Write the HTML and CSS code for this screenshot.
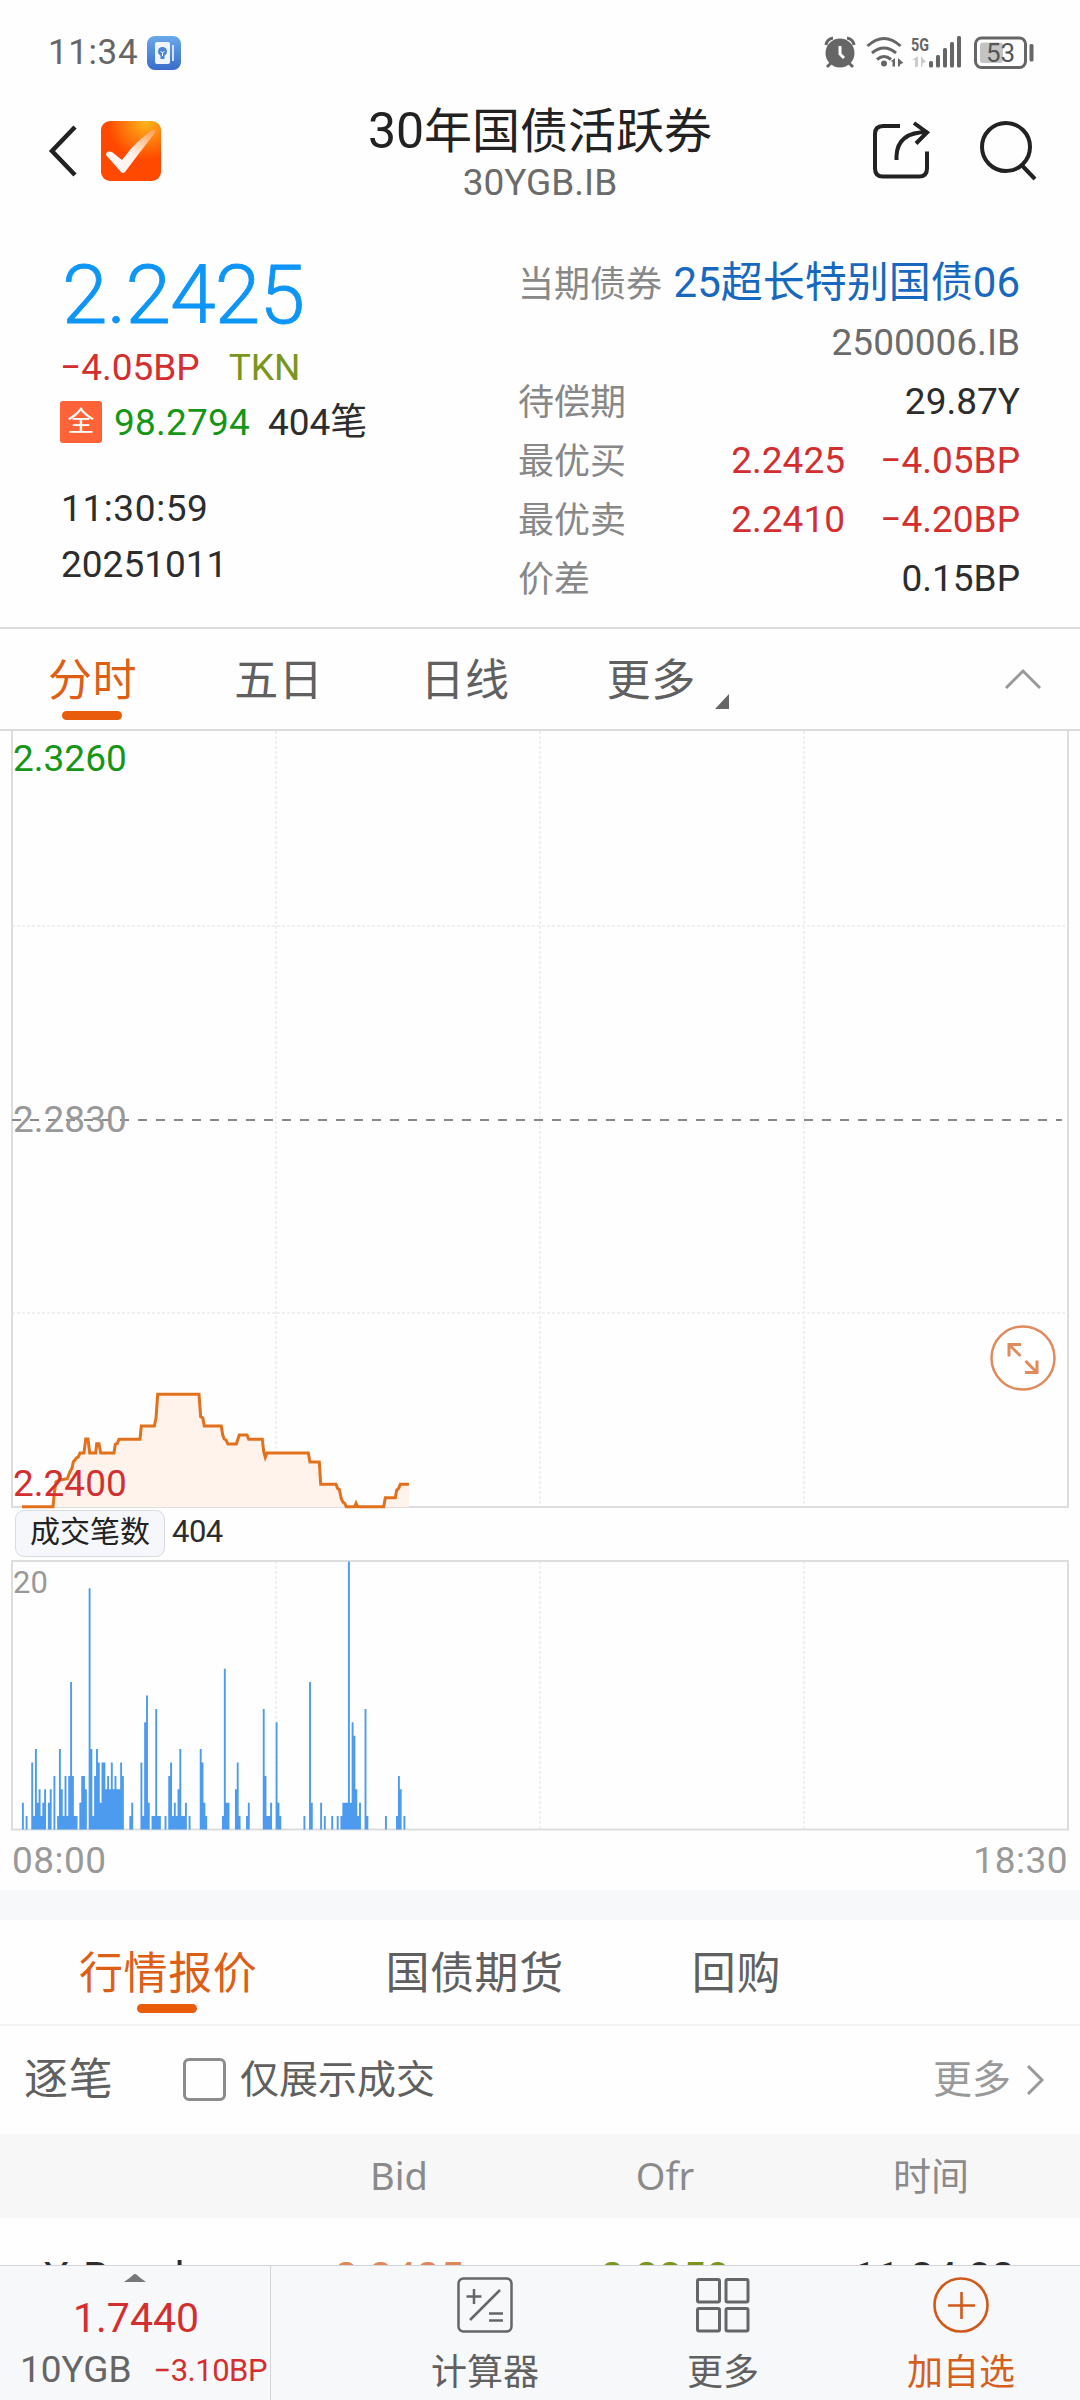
FILE: index.html
```html
<!DOCTYPE html>
<html lang="zh-CN">
<head>
    <meta charset="UTF-8">
    <meta name="viewport" content="width=device-width, initial-scale=1.0">
    <title>30年国债活跃券</title>
    <link rel="stylesheet" href="styles.css">
</head>
<body>

<div class="page">
    <div class="status">
        <span class="clock">11:34</span>
        <svg class="note" width="34" height="34" viewBox="0 0 34 34">
            <defs><linearGradient id="blue" x1="0" y1="0" x2="0" y2="1"><stop offset="0" stop-color="#69aaea"/><stop offset="1" stop-color="#3a6bcb"/></linearGradient></defs>
            <rect width="34" height="34" rx="8" fill="url(#blue)"/>
            <rect x="8" y="6" width="15" height="22" rx="2" fill="#eef5fd"/>
            <rect x="25" y="9" width="2" height="16" fill="#cfe0f7"/>
            <circle cx="15.500" cy="15.500" r="4.500" fill="#4a84d8"/>
            <path d="M13.500 19h4v4h-4z" fill="#4a84d8"/>
            <path d="M13.500 15l2 2 2-2M15.500 17v3" stroke="#fff" fill="none"/>
        </svg>
        <svg class="status-icons" width="212" height="36" viewBox="824 34 212 36">
            <g fill="#666" stroke="none">
                <circle cx="840" cy="53" r="14.500"/>
                <circle cx="884" cy="63.500" r="3"/>
                <rect x="929" y="61" width="4" height="6.500" rx="1.500"/>
                <rect x="936" y="55" width="4" height="12.500" rx="1.500"/>
                <rect x="943" y="48" width="4" height="19.500" rx="1.500"/>
                <rect x="950" y="42" width="4" height="25.500" rx="1.500"/>
                <rect x="957" y="36" width="4" height="31.500" rx="1.500"/>
                <rect x="1029.500" y="44" width="4" height="17.500" rx="1.500"/>
                <path d="M895 58v8.500h-2.500v-5h-2zM898 58l5.500 5-3 1-1 2.500h-1.500z"/>
            </g>
            <g fill="none" stroke="#666" stroke-width="3">
                <path d="M826 45q1-6 7-7M854 45q-1-6-7-7M832 62l-5 5M848 62l5 5"/>
                <path d="M867.500 46q16.500-15 33 0M872 53q12-10 24 0M877 59.500q7-6 14 0"/>
                <path d="M840 46v8l4 4" stroke="#fff"/>
                <rect x="975.500" y="38" width="50" height="29.500" rx="6" stroke-width="3"/>
            </g>
            <path d="M918 56v11h-3v-7h-3zM921 56l5 6-3 1-1 4h-1z" fill="#ccc"/>
            <rect x="980" y="42.500" width="23" height="20.500" rx="3" fill="#c3c3c3"/>
            <text x="911" y="50.500" class="net" textLength="18" lengthAdjust="spacingAndGlyphs">5G</text>
            <text x="986" y="62" class="battery">53</text>
        </svg>
    </div>

    <div class="nav">
        <div class="nav-left">
            <svg width="30" height="52" viewBox="0 0 30 52"><path d="M27 2L4 26l23 24" fill="none" stroke="#222" stroke-width="4.500"/></svg>
            <svg class="logo" width="60" height="60" viewBox="0 0 60 60">
                <defs>
                    <radialGradient id="glow" cx=".75" cy="0" r=".65"><stop offset="0" stop-color="#ffb81c"/><stop offset="1" stop-color="#ff4800"/></radialGradient>
                    <linearGradient id="tick" x1="0" y1="1" x2="1" y2="0"><stop offset="0" stop-color="#fff"/><stop offset=".5" stop-color="#fff0e8"/><stop offset="1" stop-color="#ff9c50"/></linearGradient>
                </defs>
                <rect width="60" height="60" rx="9" fill="url(#glow)"/>
                <path d="M5 34q0-5 6-3l10 8Q34 21 51 9q4-1 3 3Q38 32 24 51q-2 2-4 0Z" fill="url(#tick)"/>
            </svg>
        </div>
        <div class="nav-title">
            <h1><span class="n">30</span>年国债活跃券</h1>
            <p>30YGB.IB</p>
        </div>
        <div class="nav-right">
            <svg width="60" height="60" viewBox="870 121 60 60" fill="none" stroke="#222" stroke-width="4">
                <path d="M899 127H882q-8 0-8 8V169.500q0 8 8 8h36q8 0 8-8V152.500"/>
                <path d="M895.500 161v-4q1-24 31-24M913 124l13 9.500-11 11"/>
            </svg>
            <svg width="60" height="62" viewBox="979 118 60 62" fill="none" stroke="#222" stroke-width="4">
                <circle cx="1006" cy="146" r="24"/>
                <path d="M1022.500 165l12.500 13"/>
            </svg>
        </div>
    </div>

    <div class="quote">
        <div class="quote-left">
            <div class="price">2.2425</div>
            <div class="row"><span class="red">−4.05BP</span><span class="olive">TKN</span></div>
            <div class="row net-row"><span class="tag">全</span><span class="green">98.2794</span><span class="count">404笔</span></div>
            <div class="time">11:30:59</div>
            <div class="date">20251011</div>
        </div>
        <div class="quote-right">
            <div class="line"><label>当期债券</label><span class="bond">25超长特别国债06</span></div>
            <div class="line"><span class="code">2500006.IB</span></div>
            <div class="line"><label>待偿期</label><span>29.87Y</span></div>
            <div class="line red"><label>最优买</label><span class="best">2.2425</span><span class="bp">−4.05BP</span></div>
            <div class="line red"><label>最优卖</label><span class="best">2.2410</span><span class="bp">−4.20BP</span></div>
            <div class="line"><label>价差</label><span>0.15BP</span></div>
        </div>
    </div>

    <div class="tabs">
        <span class="tab active">分时</span>
        <span class="tab">五日</span>
        <span class="tab">日线</span>
        <span class="tab">更多</span>
        <svg class="corner" width="14" height="15" viewBox="0 0 14 15"><path d="M14 0v15H0z" fill="#666"/></svg>
        <svg class="fold" width="38" height="22" viewBox="0 0 38 22"><path d="M2 20L19 3l17 17" fill="none" stroke="#999" stroke-width="3"/></svg>
    </div>

    <div class="chart">
        <svg width="1080" height="778" viewBox="0 0 1080 778">
            <g class="grid-lines">
                <path d="M276 0v776M540 0v776M804 0v776M12 195h1056M12 582h1056"/>
            </g>
            <path d="M12 0v776h1056V0" fill="none" stroke="#ddd" stroke-width="2"/>
            <path d="M12 389h1050" stroke="#888" stroke-width="2" stroke-dasharray="9 9"/>
            <path id="area" fill="#fff3ec"/>
            <polyline id="line" fill="none" stroke="#e2711d" stroke-width="3" points="22,775.7 53,775.7 54.3,762 56,750.7 60,749 67.300,747.7 70,740.7 72,737.3 73.3,731 76.7,726.7 78.3,726 80,722 84,722 85.7,708 88,708 89.7,722 95.7,722 96.7,712.7 99,712.7 100.7,722 114,722 115.3,713.3 117.3,712.3 119,708.3 140,708.3 141.3,695 154.3,695 156,687.3 157.7,663.3 199,663.3 200.7,685.7 202.7,686.7 204.3,695 221.3,695 222.7,704 224.3,708 226,709 228,713 236.3,713 239.3,704 247,704 248.7,708.3 262.3,708.3 263.7,720.7 265.3,726.3 267,722 308.3,722 310,731 319.3,731 320.7,753.3 336,753.3 337.7,757.7 339.3,758.3 341.3,767.7 343,771.3 344.7,772.3 346.3,775.7 354.7,775.7 356,772.3 357.7,775.7 383.7,775.7 385.3,766.7 395.3,766.7 396.7,759 398.7,757.3 400.3,753.3 409,753.3"/>
            <g fill="none" stroke="#e08a5e" stroke-width="2.500">
                <circle cx="1023" cy="627" r="31.500" fill="#fff"/>
                <path d="M1020.500 625L1009 613.500M1009 625.500v-12h12M1025.500 630L1037 641.500M1025 641.500h12v-12" stroke-width="3"/>
            </g>
        </svg>
        <span class="axis high">2.3260</span>
        <span class="axis mid">2.2830</span>
        <span class="axis low">2.2400</span>
    </div>

    <div class="vol-head"><span class="vol-name">成交笔数</span><span class="vol-num">404</span></div>

    <div class="chart volume">
        <svg width="1080" height="271" viewBox="0 0 1080 271">
            <g class="grid-lines"><path d="M276 1v268M540 1v268M804 1v268"/></g>
            <path d="M12 1h1056v268.500H12z" fill="none" stroke="#ddd" stroke-width="2"/>
            <path id="bars" stroke="#4c9bef" stroke-width="1.900"/>
        </svg>
        <span class="axis vol-max">20</span>
    </div>
    <div class="hours"><span>08:00</span><span>18:30</span></div>

    <div class="gap"></div>

    <div class="tabs2">
        <span class="tab active">行情报价</span>
        <span class="tab">国债期货</span>
        <span class="tab">回购</span>
    </div>

    <div class="filter">
        <span class="filter-name">逐笔</span>
        <i class="box"></i>
        <span class="only">仅展示成交</span>
        <span class="more">更多</span>
        <svg width="20" height="32" viewBox="0 0 20 32"><path d="M2 2l14 14L2 30" fill="none" stroke="#999" stroke-width="3"/></svg>
    </div>

    <div class="thead"><span></span><span>Bid</span><span>Ofr</span><span>时间</span></div>
    <div class="trow"><span>X-Bond</span><span class="bid">2.2425</span><span class="ofr">2.2350</span><span>11:34:02</span></div>

    <div class="bottom">
        <div class="index">
            <svg width="22" height="8" viewBox="0 0 22 8"><path d="M0 8Q6 4 9 1q2-2 4 0 3 3 9 7z" fill="#777"/></svg>
            <div class="index-price">1.7440</div>
            <div class="index-row"><span>10YGB</span><span class="red">−3.10BP</span></div>
        </div>
        <div class="actions">
            <div class="action">
                <svg width="56" height="56" viewBox="0 0 56 56" fill="none" stroke="#666" stroke-width="2.500">
                    <rect x="1.500" y="1.500" width="53" height="53" rx="5"/>
                    <path d="M9.500 19.500h15M17 12v15M13 43l30-30M32 36.500h14M32 43.500h14"/>
                </svg>
                <span>计算器</span>
            </div>
            <div class="action">
                <svg width="54" height="56" viewBox="0 0 54 56" fill="none" stroke="#666" stroke-width="3">
                    <rect x="1.500" y="2.500" width="22" height="22.500" rx="1.500"/><rect x="30" y="2.500" width="22" height="22.500" rx="1.500"/>
                    <rect x="1.500" y="31.500" width="22" height="22.500" rx="1.500"/><rect x="30" y="31.500" width="22" height="22.500" rx="1.500"/>
                </svg>
                <span>更多</span>
            </div>
            <div class="action add">
                <svg width="56" height="56" viewBox="0 0 56 56" fill="none" stroke="#cf5a1c" stroke-width="2.600">
                    <circle cx="28" cy="28" r="26.500"/><path d="M15 28.500h27M28.500 15v27"/>
                </svg>
                <span>加自选</span>
            </div>
        </div>
    </div>
</div>

<script>
    // [minute slot, trades]
    const trades = [
        [0,2],[2,1],[5,5],[6,1],[7,6],[8,2],[9,3],[10,1],[11,2],[12,3],[14,2],[15,3],[17,4],[19,1],
        [20,6],[21,3],[22,1],[23,4],[24,1],[25,4],[26,11],[27,4],[28,1],[29,1],[31,2],[32,4],[33,4],[34,3],
        [36,18],[37,6],[38,1],[39,4],[40,6],[41,5],[42,2],[43,5],[44,5],[45,3],[46,4],[47,3],[48,5],[49,3],
        [50,4],[51,3],[52,3],[53,5],[54,4],[58,1],[59,2],[64,5],[65,1],[66,8],[67,10],[68,2],[70,1],[71,1],
        [72,9],[73,1],[74,1],[77,1],[79,4],[80,5],[81,1],[82,2],[83,1],[84,3],[85,6],[86,1],[87,1],[88,2],
        [90,1],[96,6],[97,5],[98,2],[99,1],[108,1],[109,12],[110,2],[111,2],[115,3],[116,5],[117,1],[121,1],
        [122,2],[130,9],[131,4],[132,1],[133,1],[134,2],[137,8],[138,2],[139,1],[152,1],[155,11],[156,2],
        [161,2],[163,1],[167,1],[170,1],[172,1],[173,2],[174,2],[175,2],[176,20],[177,2],[178,8],[179,7],
        [180,3],[181,1],[182,2],[185,9],[186,1],[196,1],[202,1],[203,4],[204,3],[206,1]
    ];
    document.getElementById("bars").setAttribute("d", trades.map(([m, v]) =>
        `M${(22.9 + m * 1.852).toFixed(1)} 269.500v${(-v * 13.4).toFixed(1)}`).join(""));

    const points = document.getElementById("line").getAttribute("points");
    document.getElementById("area").setAttribute("d", "M" + points + " 409,776 22,776z");
</script>

</body>
</html>
```
FILE: styles.css
```css
* { box-sizing: border-box; margin: 0; padding: 0; }
body { width: 1080px; background: #fefefe; font-family: Roboto, "Noto Sans CJK SC", sans-serif; font-size: 37px; color: #2d2d2d; }
svg { display: block; flex: none; }
.page { width: 1080px; height: 2400px; display: flex; flex-direction: column; overflow: hidden; white-space: nowrap; }
.page > div { flex: none; }
.red { color: #d32f2f; }
.green { color: #169616; }
.olive { color: #7a961c; }

.status { height: 100px; padding: 34px 44px 0 48px; display: flex; align-items: flex-start; }
.clock { width: 99px; font-size: 35px; line-height: 38px; color: #666; letter-spacing: 0.6px; }
.note { margin-top: 2px; }
.status-icons { margin-left: auto; }
.net { font-size: 19px; font-weight: bold; fill: #666; }
.battery { font-size: 26px; fill: #555; }

.nav { height: 102px; display: grid; grid-template-columns: 300px 1fr 300px; }
.nav-left { display: flex; align-items: center; padding: 0 0 2px 48px; gap: 23px; }
.nav-right { display: flex; align-items: center; justify-content: flex-end; padding: 0 41px 3px 0; gap: 48px; }
.nav-title { text-align: center; }
h1 { font-size: 48px; line-height: 62px; font-weight: 400; color: #222; }
h1 .n { font-size: 50px; }
.nav-title p { line-height: 40px; color: #6b6b6b; }

.quote { height: 425px; display: flex; padding: 52px 60px 0 60px; }
.quote-left { width: 458px; padding-top: 1px; }
.price { padding-left: 2px; font-size: 82px; line-height: 80px; font-weight: 300; -webkit-text-stroke: 0.8px #0d95f7; letter-spacing: -0.8px; color: #0d95f7; margin-bottom: 4px; }
.row { display: flex; align-items: center; height: 56px; gap: 29px; }
.net-row { height: 54px; gap: 0; margin-bottom: 32px; }
.tag { width: 42px; height: 42px; margin-right: 12px; border-radius: 3px; background: #ff6337; color: #fff; font-size: 27px; line-height: 42px; text-align: center; }
.green { letter-spacing: 0.2px; }
.count { margin-left: 18px; line-height: 56px; height: 54px; }
.time, .date { line-height: 56px; padding-left: 1px; }
.time { letter-spacing: 0.6px; }
.quote-right { flex: 1; }
.line { height: 59px; line-height: 59px; display: flex; justify-content: flex-end; }
.line label { margin-right: auto; font-size: 36px; line-height: 63px; color: #888; }
.bond { font-size: 42px; line-height: 58px; color: #1769c0; }
.code { color: #6b6b6b; }
.bp { width: 175px; text-align: right; }

.tabs { height: 104px; border-top: 2px solid #dcdcdc; border-bottom: 2px solid #dcdcdc; display: flex; align-items: center; padding: 0 38px 0 48px; }
.tab { position: relative; font-size: 44px; line-height: 64px; letter-spacing: 0.6px; top: 2px; color: #606060; margin-right: 97px; }
.tab.active { color: #dd5f16; }
.tab.active::after { content: ""; position: absolute; left: 50%; bottom: -7px; width: 60px; height: 9px; margin-left: -31px; border-radius: 5px; background: #e85c0c; }
.tabs .tab:nth-child(4) { margin-right: 19px; }
.corner { margin-top: 44px; }
.fold { margin-left: auto; }

.chart { position: relative; height: 776px; }
.grid-lines { stroke: #f0f0f0; stroke-width: 2; stroke-dasharray: 3 2; }
.axis { position: absolute; left: 13px; line-height: 40px; }
.high { top: 8px; color: #169616; }
.mid { top: 369px; color: #999; }
.low { top: 733px; color: #d32f2f; }
.vol-head { height: 53px; padding: 3px 0 0 15px; display: flex; align-items: flex-start; }
.vol-name { height: 47px; line-height: 42px; padding: 0 14px; border: 1px solid #d8dce2; border-radius: 9px; background: #f6f7fa; font-size: 30px; color: #222; }
.vol-num { margin-left: 7px; font-size: 31px; line-height: 43px; letter-spacing: -0.5px; }
.volume { height: 271px; }
.vol-max { top: 3px; font-size: 31px; color: #999; }
.hours { height: 59px; padding: 0 12px 0 12px; display: flex; justify-content: space-between; line-height: 59px; letter-spacing: 0.5px; color: #999; }
.gap { height: 30px; background: #f7f8fa; }

.tabs2 { height: 106px; border-bottom: 2px solid #f2f2f2; display: flex; align-items: center; padding-left: 79px; }
.tabs2 .tab { margin-right: 128px; }
.filter { height: 108px; display: flex; align-items: center; padding: 0 34px 0 24px; color: #606060; }
.filter-name { font-size: 44px; line-height: 60px; width: 159px; letter-spacing: 0.8px; }
.box { width: 43px; height: 43px; border: 3px solid #8c8c8c; border-radius: 6px; margin: 0 14px 2px 0; }
.only { font-size: 39px; line-height: 60px; padding-bottom: 1px; }
.more { margin-left: auto; margin-right: 15px; font-size: 39px; line-height: 60px; padding-bottom: 1px; color: #999; }
.thead { height: 84px; background: #f7f7f8; display: grid; grid-template-columns: 266px 266px 266px 266px; line-height: 82px; font-family: "Noto Sans", "Noto Sans CJK SC", sans-serif; font-size: 38px; color: #8a8a8a; text-align: center; }
.trow { height: 47px; overflow: hidden; display: grid; grid-template-columns: 266px 266px 266px 272px; padding-top: 36px; font-size: 42px; line-height: 48px; text-align: center; }
.trow span:first-child { text-align: left; padding-left: 43px; letter-spacing: 1.5px; }
.bid { color: #e0875a; }
.ofr { color: #7a961c; }

.bottom { height: 135px; display: flex; background: #f7f8fa; border-top: 1px solid #d3d5d8; }
.index { flex: none; width: 271px; border-right: 1px solid #d3d5d8; padding-top: 8px; display: flex; flex-direction: column; align-items: center; }
.index-price { padding-left: 2px; font-size: 41px; line-height: 72px; color: #d32f2f; }
.index-row { align-self: flex-end; padding-right: 3px; display: flex; gap: 22px; line-height: 32px; color: #666; }
.index-row .red { font-size: 31px; line-height: 34px; letter-spacing: -0.5px; }
.actions { flex: 1; display: flex; padding-left: 95px; }
.action { width: 238px; padding-top: 11px; display: flex; flex-direction: column; align-items: center; font-size: 36px; color: #606060; }
.action span { line-height: 80px; }
.action.add { color: #d55f1d; }
```
